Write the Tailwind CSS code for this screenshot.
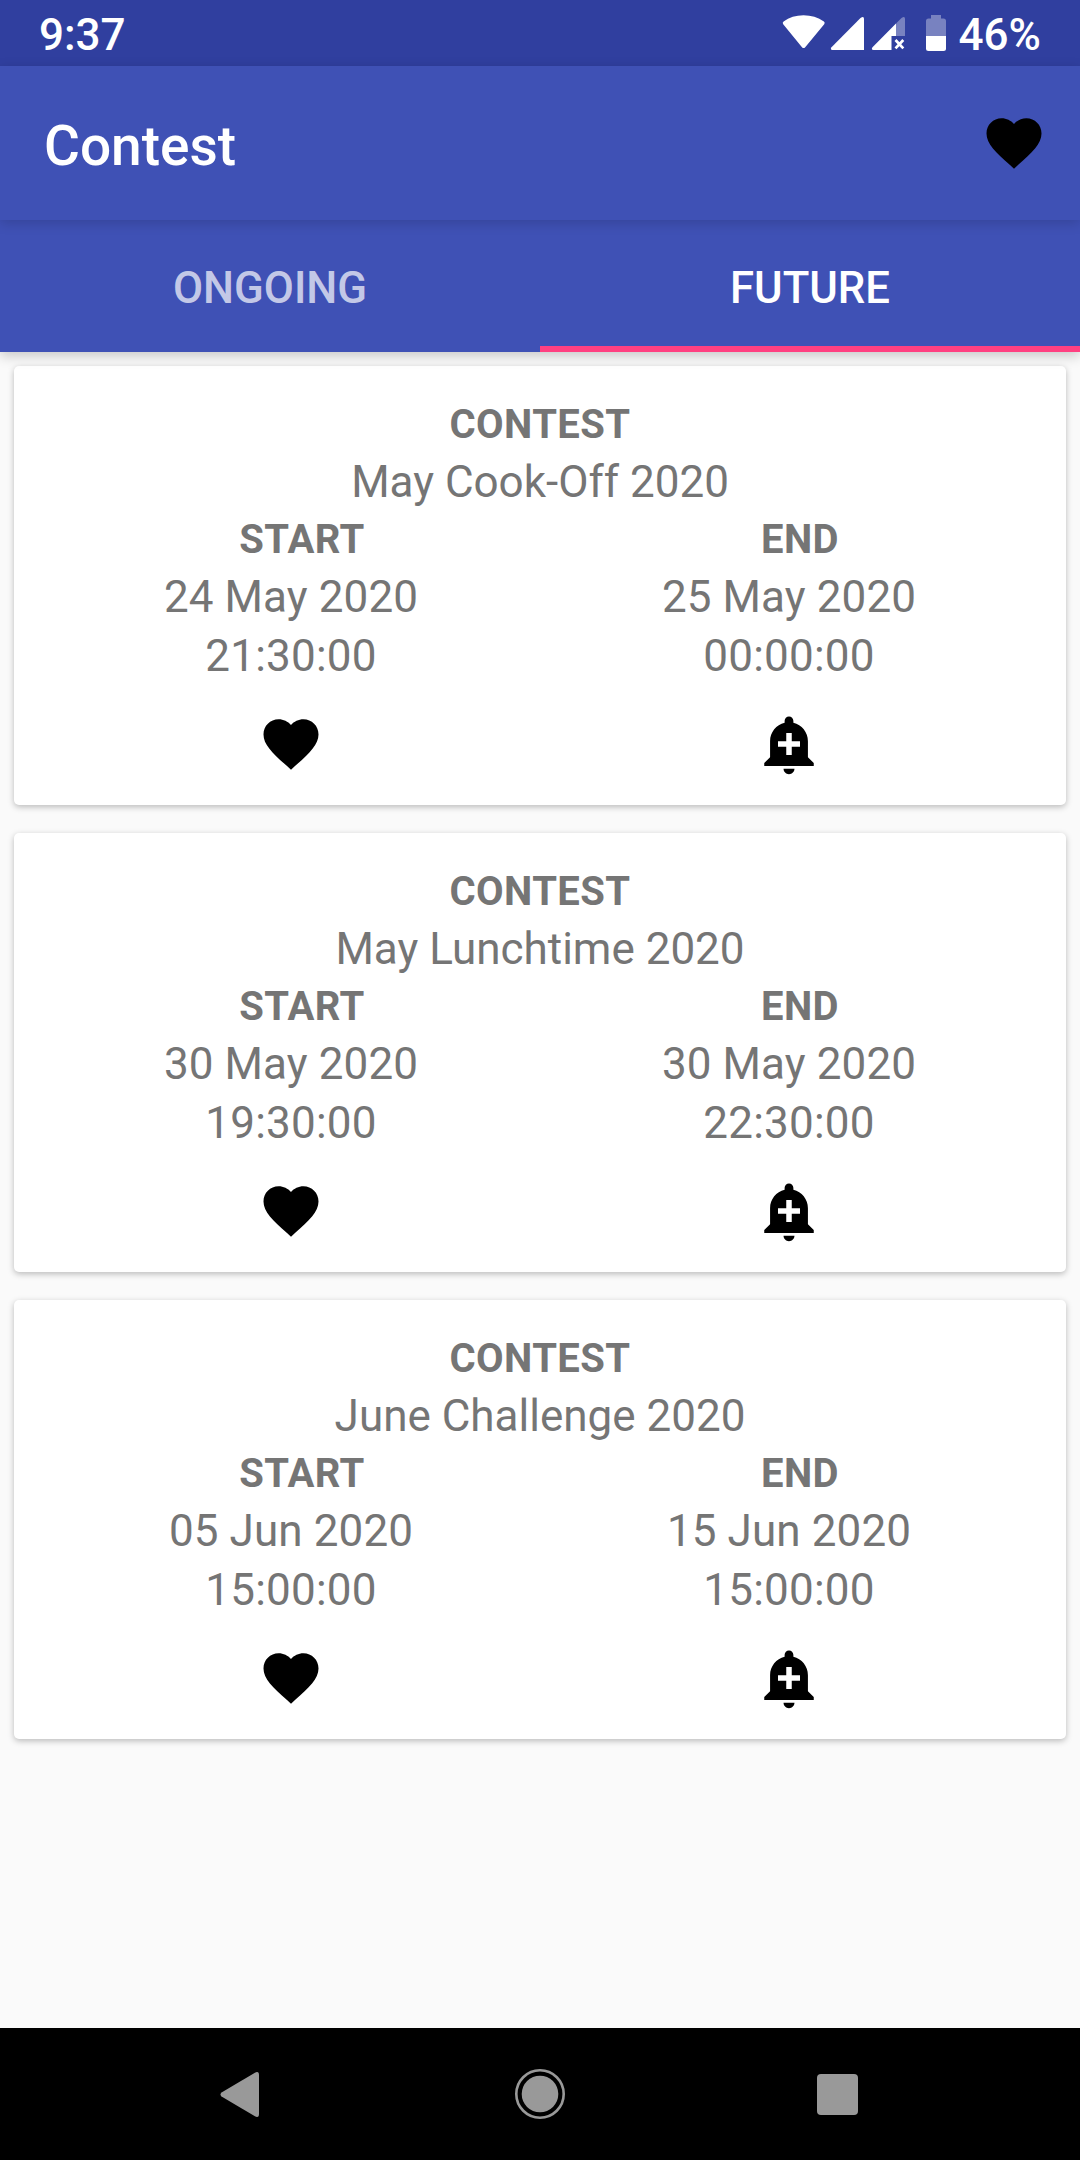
<!DOCTYPE html>
<html lang="en">
<head>
<meta charset="utf-8">
<title>Contest</title>
<script src="https://cdn.jsdelivr.net/npm/@tailwindcss/browser@4"></script>
</head>
<body class="w-[1080px] h-[2160px] flex flex-col bg-[#fafafa] font-['Roboto',sans-serif] overflow-hidden">
<svg class="hidden">
  <symbol id="heart" viewBox="0 0 24 24"><path d="M12 21.35l-1.45-1.32C5.4 15.36 2 12.28 2 8.5 2 5.42 4.42 3 7.5 3c1.74 0 3.41.81 4.5 2.09C13.09 3.81 14.76 3 16.5 3 19.58 3 22 5.42 22 8.5c0 3.78-3.4 6.86-8.55 11.54L12 21.35z"/></symbol>
  <symbol id="bell" viewBox="0 0 24 24"><path d="M10.01 21.01c0 1.1.89 1.99 1.99 1.99s1.99-.89 1.99-1.99h-3.98zm8.87-4.19V11c0-3.25-2.25-5.97-5.29-6.69v-.72C13.59 2.71 12.88 2 12 2s-1.59.71-1.59 1.59v.72C7.37 5.03 5.12 7.75 5.12 11v5.82L3 18.94V20h18v-1.06l-2.12-2.12zM16 13.01h-3v3h-2v-3H8V11h3V8h2v3h3v2.01z"/></symbol>
</svg>

<div class="h-[66px] shrink-0 bg-[#303f9f] text-white flex items-center justify-between px-[39px]">
  <span class="text-[44px] leading-[62px] font-medium pt-[4px]">9:37</span>
  <div class="flex items-center">
    <svg class="w-[179px] h-[66px]" viewBox="780 0 179 66" fill="#fff">
      <path d="M783.2 24.2Q782 22.7 783.6 21.6Q792 15.3 803.5 15.3Q815 15.3 823.9 21.6Q825.4 22.7 824.2 24.2L805.2 47.2Q803.6 49 802 47.2Z"/>
      <path d="M832.5 50Q829.8 49.6 831.5 47.2L860.5 18Q864 15.5 864 19V50Z"/>
      <path d="M896 23.5L901.5 18Q905 15.5 905 19V36H896Z" fill-opacity=".35"/>
      <path d="M873.5 50Q870.8 49.6 872.5 47.2L896 23.6V36H891.5V50Z"/>
      <path d="M895.5 40L903.3 48.3M903.3 40L895.5 48.3" stroke="#fff" stroke-width="2.7"/>
      <path d="M926 36V21Q926 18.5 928.5 18.5H931V15H941V18.5H943.5Q946 18.5 946 21V36Z" fill-opacity=".35"/>
      <path d="M926 36H946V48.5Q946 51 943.5 51H928.5Q926 51 926 48.5Z"/>
    </svg>
    <span class="text-[44px] leading-[62px] font-medium pt-[4px]">46%</span>
  </div>
</div>

<header class="relative z-20 h-[154px] shrink-0 bg-[#3f51b5] text-white flex items-center justify-between pl-[44px] pr-[33px] shadow-[0_3px_12px_rgba(0,0,0,0.16)]">
  <h1 class="text-[55px] leading-[64px] font-medium pt-[5px]">Contest</h1>
  <svg class="size-[66px] -mt-[1px] fill-black"><use href="#heart"/></svg>
</header>

<nav class="relative z-10 h-[132px] shrink-0 bg-[#3f51b5] text-white grid grid-cols-2 text-center text-[43.7px] font-medium leading-[136px] shadow-[0_4px_12px_rgba(0,0,0,0.2)]">
  <div class="text-white/70">ONGOING</div>
  <div class="border-b-[6px] border-[#ff4081] h-[132px]">FUTURE</div>
</nav>

<main class="flex-1 flex flex-col gap-[28px] px-[14px] pt-[14px] text-[#757575] text-center text-[44px] leading-[59px]">
  <section class="h-[439px] bg-white rounded-[5px] px-[28px] pt-[32px] shadow-[0_2px_6px_rgba(0,0,0,0.26)]">
    <h2 class="mb-[1px] text-[40px] leading-[54px] font-bold tracking-[0.4px]">CONTEST</h2>
    <p>May Cook-Off 2020</p>
    <div class="-mt-[1px] grid grid-cols-2">
      <div><h3 class="pl-[22px] text-[40px] leading-[57px] font-bold tracking-[0.4px]">START</h3><p class="tracking-[0.1px]">24 May 2020</p><p class="tracking-[0.2px]">21:30:00</p><svg class="size-[66px] mt-[25px] mx-auto fill-black"><use href="#heart"/></svg></div>
      <div><h3 class="pl-[22px] text-[40px] leading-[57px] font-bold tracking-[0.4px]">END</h3><p class="tracking-[0.1px]">25 May 2020</p><p class="tracking-[0.2px]">00:00:00</p><svg class="size-[66px] mt-[25px] mx-auto fill-black"><use href="#bell"/></svg></div>
    </div>
  </section>
  <section class="h-[439px] bg-white rounded-[5px] px-[28px] pt-[32px] shadow-[0_2px_6px_rgba(0,0,0,0.26)]">
    <h2 class="mb-[1px] text-[40px] leading-[54px] font-bold tracking-[0.4px]">CONTEST</h2>
    <p>May Lunchtime 2020</p>
    <div class="-mt-[1px] grid grid-cols-2">
      <div><h3 class="pl-[22px] text-[40px] leading-[57px] font-bold tracking-[0.4px]">START</h3><p class="tracking-[0.1px]">30 May 2020</p><p class="tracking-[0.2px]">19:30:00</p><svg class="size-[66px] mt-[25px] mx-auto fill-black"><use href="#heart"/></svg></div>
      <div><h3 class="pl-[22px] text-[40px] leading-[57px] font-bold tracking-[0.4px]">END</h3><p class="tracking-[0.1px]">30 May 2020</p><p class="tracking-[0.2px]">22:30:00</p><svg class="size-[66px] mt-[25px] mx-auto fill-black"><use href="#bell"/></svg></div>
    </div>
  </section>
  <section class="h-[439px] bg-white rounded-[5px] px-[28px] pt-[32px] shadow-[0_2px_6px_rgba(0,0,0,0.26)]">
    <h2 class="mb-[1px] text-[40px] leading-[54px] font-bold tracking-[0.4px]">CONTEST</h2>
    <p>June Challenge 2020</p>
    <div class="-mt-[1px] grid grid-cols-2">
      <div><h3 class="pl-[22px] text-[40px] leading-[57px] font-bold tracking-[0.4px]">START</h3><p class="tracking-[0.1px]">05 Jun 2020</p><p class="tracking-[0.2px]">15:00:00</p><svg class="size-[66px] mt-[25px] mx-auto fill-black"><use href="#heart"/></svg></div>
      <div><h3 class="pl-[22px] text-[40px] leading-[57px] font-bold tracking-[0.4px]">END</h3><p class="tracking-[0.1px]">15 Jun 2020</p><p class="tracking-[0.2px]">15:00:00</p><svg class="size-[66px] mt-[25px] mx-auto fill-black"><use href="#bell"/></svg></div>
    </div>
  </section>
</main>

<footer class="h-[132px] shrink-0 bg-black flex items-center justify-between px-[210px]">
  <svg class="size-[60px]" viewBox="210 2064 60 60" fill="#999"><path d="M221.5 2092.5L254.5 2073Q259 2070.5 259 2075V2114Q259 2118.5 254.5 2116L221.5 2096.5Q219.5 2094.5 221.5 2092.5Z"/></svg>
  <svg class="size-[60px]" viewBox="0 0 60 60"><circle cx="30" cy="30" r="23.7" fill="none" stroke="#999" stroke-width="2.6"/><circle cx="30" cy="30" r="18.3" fill="#999"/></svg>
  <svg class="size-[60px]" viewBox="0 0 60 60" fill="#999"><rect x="7" y="10" width="41" height="41" rx="4"/></svg>
</footer>
</body>
</html>
